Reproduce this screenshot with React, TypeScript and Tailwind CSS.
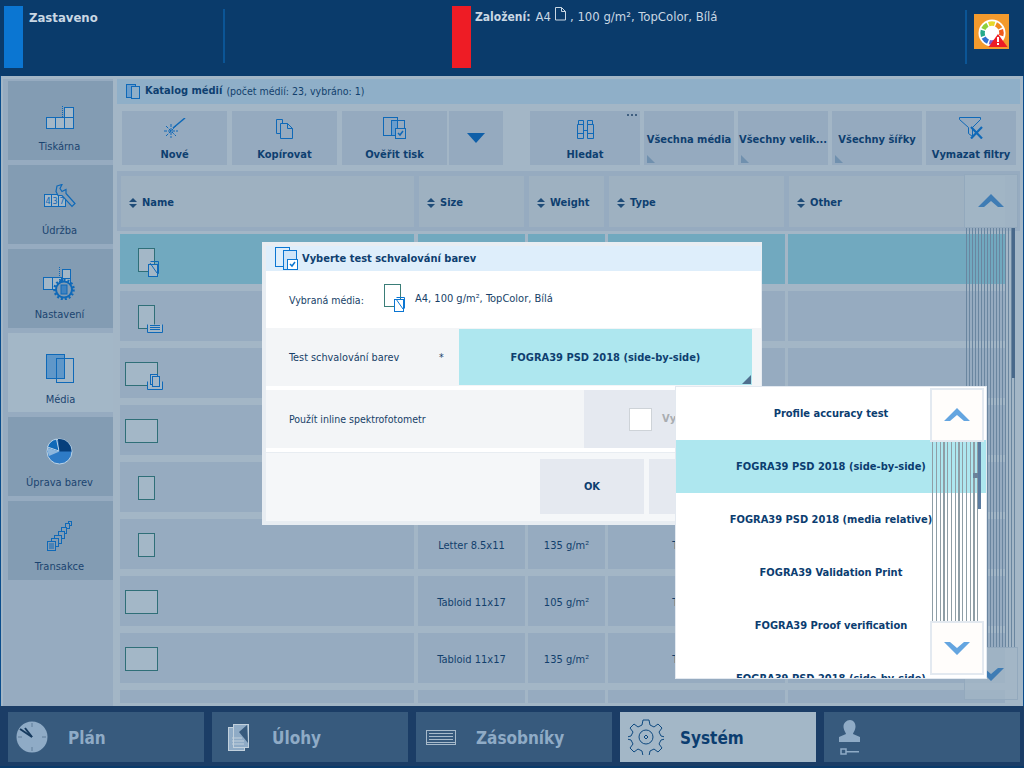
import React from "react";

const B = "#0f69b8";
const G = "#2f6f78";

const Doc = ({ w = 16, h = 23, fill = "#a3b7c7", stroke = G }: { w?: number; h?: number; fill?: string; stroke?: string }) => (
  <rect x="0.5" y="0.5" width={w} height={h} fill={fill} stroke={stroke} />
);

function MediaIcon({ kind }: { kind: number }) {
  if (kind === 0)
    return (
      <svg width="26" height="30" className="ml-[18px] mt-[8px]">
        <Doc />
        <rect x="10.5" y="16.5" width="9" height="12" fill="#a3b7c7" stroke={B} />
        <path d="M12.5 13.500h8v12h-1" fill="none" stroke={B} />
        <path d="M12 15l7 10" stroke={B} />
      </svg>
    );
  if (kind === 1)
    return (
      <svg width="26" height="30" className="ml-[18px] mt-[8px]">
        <Doc />
        <path d="M9.5 19.5v8h15v-8M12 20.5h10M12 22.5h10M12 24.5h10" fill="#a3b7c7" stroke={B} />
      </svg>
    );
  if (kind === 2)
    return (
      <svg width="40" height="30" className="ml-[5px] mt-[8px]">
        <Doc w={32} />
        <path d="M22.5 19.5v8h15v-8" fill="#a3b7c7" stroke={B} />
        <rect x="25.5" y="12.5" width="7" height="10" fill="#a3b7c7" stroke={B} />
        <rect x="27.5" y="14.5" width="7" height="10" fill="#a3b7c7" stroke={B} />
      </svg>
    );
  if (kind === 3 || kind === 5)
    return (
      <svg width="34" height="24" className="ml-[5px] mt-[2px]">
        <Doc w={32} />
      </svg>
    );
  return (
    <svg width="18" height="24" className="ml-[18px] mt-[2px]">
      <Doc />
    </svg>
  );
}

const side = [
  {
    t: "Tiskárna",
    pt: "pt-[25px]",
    i: (
      <svg width="28" height="24" fill="#a3b7c7" stroke={B}>
        <rect x="0.5" y="11.5" width="9" height="11" />
        <rect x="9.5" y="11.5" width="9" height="11" />
        <rect x="18.5" y="11.5" width="9" height="11" />
        <rect x="18.5" y="1.5" width="9" height="10" />
        <path d="M16.5 0v12" strokeDasharray="1 1" />
      </svg>
    ),
  },
  {
    t: "Údržba",
    pt: "pt-[19px]",
    i: (
      <svg width="32" height="24" fill="none" stroke={B}>
        <rect x="0.5" y="10.5" width="7" height="12" fill="#a3b7c7" />
        <rect x="7.5" y="10.5" width="7" height="12" fill="#a3b7c7" />
        <rect x="14.5" y="10.5" width="7" height="12" fill="#a3b7c7" />
        <text x="1.5" y="20" fontSize="9" fill={B} stroke="none">4</text>
        <text x="8.5" y="20" fontSize="9" fill={B} stroke="none">3</text>
        <text x="15.5" y="20" fontSize="9" fill={B} stroke="none">7</text>
        <path d="M13 2l5-1.500-2 4 2 3 4-2v4l9 10-3 3-10-11h-4l-2-4z" fill="#849db4" strokeWidth="1.2" />
      </svg>
    ),
  },
  {
    t: "Nastavení",
    pt: "pt-[18px]",
    i: (
      <svg width="33" height="33" fill="#a3b7c7" stroke={B}>
        <rect x="0.5" y="10.5" width="9" height="12" />
        <rect x="9.5" y="10.5" width="9" height="12" />
        <rect x="19.5" y="2.5" width="8" height="9" />
        <rect x="19.5" y="11.5" width="8" height="9" />
        <path d="M16.5 0v17" strokeDasharray="1 1" />
        <circle cx="21" cy="22.500" r="8" fill="#849db4" strokeWidth="2" />
        <circle cx="21" cy="22.500" r="9.500" fill="none" strokeWidth="2.500" strokeDasharray="2 2" />
        <rect x="18" y="18" width="6" height="9" fill="#3f82c0" />
      </svg>
    ),
  },
  {
    t: "Média",
    active: true,
    pt: "pt-[21px]",
    i: (
      <svg width="29" height="30" stroke={B} fill="none">
        <rect x="0.5" y="0.5" width="18" height="24" fill="#5f97c9" strokeWidth="1" />
        <rect x="10.5" y="4.5" width="17" height="24" />
      </svg>
    ),
  },
  {
    t: "Úprava barev",
    pt: "pt-[21px]",
    i: (
      <svg width="27" height="27" viewBox="0 0 27 27">
        <circle cx="13.5" cy="13.5" r="12.5" fill="#2e7bc6" stroke="#bcd4e8" />
        <path d="M13 13L1.500 9a12 12 0 0 1 9-8z" fill="#0f69b8" stroke="#bcd4e8" />
        <path d="M13.5 13.5L12 1a12.500 12.500 0 0 1 13.500 12.500z" fill="#063f7c" />
        <path d="M13.5 13.5L2 10a12 12 0 0 0 1 8z" fill="#8db6dc" />
      </svg>
    ),
  },
  {
    t: "Transakce",
    pt: "pt-[20px]",
    i: (
      <svg width="26" height="30" fill="#849db4" stroke={B}>
        <rect x="21.5" y="0.5" width="3" height="4" />
        <rect x="18.5" y="2.5" width="4" height="5" />
        <rect x="14.5" y="6.5" width="5" height="6" />
        <rect x="11.5" y="10.5" width="6" height="7" />
        <rect x="7.5" y="14.5" width="7" height="8" />
        <rect x="4.5" y="17.5" width="7" height="8" />
        <rect x="0.5" y="20.5" width="8" height="9" />
        <path d="M2 23h5M2 25h5M2 27h5" />
      </svg>
    ),
  },
];

const Tool = ({ w, icon, label, dots }: { w: string; icon: React.ReactNode; label: string; dots?: boolean }) => (
  <div className={`${w} h-[54px] bg-[#95aabf] flex flex-col items-center relative`}>
    {dots && (
      <div className="absolute top-[3px] right-[3px] flex gap-[2px]">
        <div className="w-[2px] h-[2px] bg-[#3f5f80]" />
        <div className="w-[2px] h-[2px] bg-[#3f5f80]" />
        <div className="w-[2px] h-[2px] bg-[#3f5f80]" />
      </div>
    )}
    <div className="h-[28px] flex items-end justify-center">{icon}</div>
    <div className="text-[11px] leading-[13px] font-bold text-[#0e3f70] mt-[9px] whitespace-nowrap">{label}</div>
  </div>
);

const Filter = ({ label }: { label: string }) => (
  <div className="w-[90px] h-[54px] bg-[#95aabf] flex items-center justify-center relative pt-[4px]">
    <div className="text-[11px] font-bold text-[#0e3f70] whitespace-nowrap">{label}</div>
    <svg width="8" height="8" className="absolute left-[3px] bottom-[2px]">
      <path d="M0 0L8 8H0z" fill="#7090ae" />
    </svg>
  </div>
);

const Sort = ({ label }: { label: string }) => (
  <div className="flex items-center gap-[5px] text-[11px] font-bold text-[#0e3f70]">
    <svg width="8" height="10">
      <path d="M4 0l4 4H0zM4 10l4-4H0z" fill="#1f4c78" />
    </svg>
    {label}
  </div>
);

const rows = [
  { k: 0, s: "", w: "", c: true },
  { k: 1, s: "", w: "" },
  { k: 2, s: "", w: "" },
  { k: 3, s: "", w: "" },
  { k: 4, s: "", w: "" },
  { k: 4, s: "Letter 8.5x11", w: "135 g/m²", t: "TopColor" },
  { k: 5, s: "Tabloid 11x17", w: "105 g/m²", t: "TopColor" },
  { k: 5, s: "Tabloid 11x17", w: "135 g/m²", t: "TopColor" },
];

const cols = [294, 107, 77, 177, 217];

const stripesDark = "bg-[repeating-linear-gradient(90deg,#6a86a0_0,#6a86a0_1px,transparent_1px,transparent_3px)]";
const stripesLight = "bg-[repeating-linear-gradient(90deg,#8f9ea6_0,#8f9ea6_1.25px,transparent_1.25px,transparent_3.75px)]";

const Chevron = ({ up, color }: { up: boolean; color: string }) => (
  <svg width="26" height="14">
    <path d={up ? "M0 13L13 0l13 13h-6l-7-6-7 6z" : "M0 1l13 13L26 1h-6l-7 6-7-6z"} fill={color} />
  </svg>
);

const Nav = ({ label, icon, active }: { label: string; icon: React.ReactNode; active?: boolean }) => (
  <div className={`w-[196px] h-[50px] flex items-center ${active ? "bg-[#a3b7c7]" : "bg-[#375a7d]"}`}>
    <div className="w-[60px] flex justify-center">{icon}</div>
    {label && (
      <div className={`text-[17px] font-bold pt-[4px] ${active ? "text-[#0b3d70]" : "text-[#8fabc6]"}`}>{label}</div>
    )}
  </div>
);

const wheel = ["#e6d92a", "#f08a1e", "#f05a1e", "#ffffff", "#7a5ccf", "#2e6fd0", "#25a98b", "#8ed03c"];

export default function App() {
  return (
    <div className="relative w-[1024px] h-[768px] overflow-hidden bg-[#0a3b6b] font-['DejaVu_Sans',sans-serif] font-stretch-condensed">
      <header className="h-[76px] flex text-[#c9d7e3]">
        <div className="w-[4px]" />
        <div className="w-[19px] h-[62px] mt-[6px] bg-[#0b76d2]" />
        <div className="w-[200px] pl-[6px] pt-[8px] text-[13px] font-bold">Zastaveno</div>
        <div className="w-[2px] h-[54px] mt-[9px] bg-[#0b5596]" />
        <div className="w-[227px]" />
        <div className="w-[19px] h-[62px] mt-[6px] bg-[#ee1c25]" />
        <div className="w-[494px] pl-[4px] pt-[7px] text-[13px] flex items-start">
          <span className="font-bold text-[12px] mr-[5px] pt-[1px]">Založení:</span>
          <span>A4</span>
          <svg width="11" height="14" className="mx-[4px]" fill="none" stroke="#c9d7e3">
            <path d="M0.5 0.5h6l4 4v8.5h-10zM6.5 0.5v4h4" />
          </svg>
          <span>, 100 g/m², TopColor, Bílá</span>
        </div>
        <div className="w-[2px] h-[54px] mt-[10px] bg-[#0b5596]" />
        <div className="w-[7px]" />
        <div className="w-[35px] h-[35px] mt-[14px] bg-[#f39a2d] flex items-center justify-center">
          <svg width="33" height="33" viewBox="0 0 33 33">
            <circle cx="17" cy="18" r="13.500" fill="#fff" />
            {wheel.map((c, i) => (
              <circle
                key={c}
                cx="17"
                cy="18"
                r="9.500"
                fill="none"
                stroke={c}
                strokeWidth="4.500"
                strokeDasharray="6 53.700"
                transform={`rotate(${-110 + i * 45} 17 18)`}
              />
            ))}
            <path d="M23 19l9.500 13h-19z" fill="#ee1c25" />
            <path d="M22 22h2v5h-2zM22 28h2v2h-2z" fill="#fff" />
          </svg>
        </div>
      </header>

      <main className="h-[630px] flex bg-[#a3b6c6] border-x-[1px] border-[#0b4d8c]">
        <aside className="w-[116px] mt-[3px] pl-[2px] flex flex-col">
          <div className="w-[110px] h-full bg-[#96abc0] pl-[5px] pt-[2px] flex flex-col gap-[5px]">
            {side.map((s) => (
              <div
                key={s.t}
                className={`w-[105px] h-[79px] shrink-0 flex flex-col items-center ${s.active ? "bg-[#a3b7c7]" : "bg-[#839cb3] pr-[2px]"}`}
              >
                <div className={`h-[59px] ${s.pt}`}>{s.i}</div>
                <div className={`text-[11px] leading-[13px] text-[#1b4470] ${s.active ? "mt-[1px]" : ""}`}>{s.t}</div>
              </div>
            ))}
          </div>
        </aside>

        <section className="w-[906px] mt-[3px] pr-[3px] flex flex-col">
          <div className="h-[25px] bg-[#8fafc8] flex items-center pl-[9px] text-[10.5px] text-[#123f6c]">
            <svg width="16" height="16" className="mr-[3px]" fill="none" stroke={B}>
              <rect x="0.5" y="0.5" width="9" height="13" fill="#6a9dcc" />
              <rect x="5.5" y="2.5" width="8" height="12" fill="#8fafc8" />
            </svg>
            <b className="text-[11px] text-[#0e3f70] mr-[4px]">Katalog médií</b>
            <span>(počet médií: 23, vybráno: 1)</span>
          </div>
          <div className="h-[2px]" />
          <div className="h-[65px] flex pl-[5px] pt-[5px]">
            <Tool
              w="w-[105px]"
              label="Nové"
              icon={
                <svg width="22" height="21" fill="none" stroke={B}>
                  <path d="M9 10L21 0" strokeWidth="1.500" />
                  <path d="M7 6v14M0 13h14M2 8l10 10M2 18L12 8" strokeDasharray="3 1" />
                </svg>
              }
            />
            <div className="w-[5px]" />
            <Tool
              w="w-[105px]"
              label="Kopírovat"
              icon={
                <svg width="18" height="20" fill="none" stroke={B}>
                  <path d="M0.5 0.5h6v14h-6z" />
                  <path d="M4.5 4.5h7l5 5v10h-12z" fill="#95aabf" />
                  <path d="M11.5 4.5v5h5" />
                </svg>
              }
            />
            <div className="w-[5px]" />
            <Tool
              w="w-[105px]"
              label="Ověřit tisk"
              icon={
                <svg width="24" height="22" fill="none" stroke={B}>
                  <rect x="0.5" y="0.5" width="14" height="18" />
                  <rect x="8.5" y="3.5" width="13" height="15" />
                  <rect x="8.5" y="3.5" width="6" height="15" fill="#6a9dcc" />
                  <rect x="12.5" y="11.5" width="10" height="10" fill="#95aabf" />
                  <path d="M15 16l2 2 3-4" strokeWidth="1.5" />
                </svg>
              }
            />
            <div className="w-[2px]" />
            <div className="w-[54px] h-[54px] bg-[#95aabf] flex items-center justify-center">
              <svg width="18" height="10">
                <path d="M0 0h18L9 10z" fill="#0f5fa8" />
              </svg>
            </div>
            <div className="w-[27px]" />
            <Tool
              w="w-[110px]"
              dots
              label="Hledat"
              icon={
                <svg width="19" height="19" fill="none" stroke={B}>
                  <path d="M2.5 0.5h5v4h-5zM11.5 0.5h5v4h-5zM1.5 4.500h6v14h-6zM11.5 4.500h6v14h-6zM7.5 10.500h4M1.500 13.500h6M11.500 13.500h6" />
                </svg>
              }
            />
            <div className="w-[4px]" />
            <Filter label="Všechna média" />
            <div className="w-[4px]" />
            <Filter label="Všechny velik..." />
            <div className="w-[4px]" />
            <Filter label="Všechny šířky" />
            <div className="w-[4px]" />
            <Tool
              w="w-[90px]"
              label="Vymazat filtry"
              icon={
                <svg width="24" height="22" fill="none" stroke={B}>
                  <path d="M0.5 0.5h21v2l-8 8v9l-4-3v-6l-9-8z" />
                  <path d="M12 10l11 11.500M23 10L12 21.500" strokeWidth="2.200" />
                </svg>
              }
            />
          </div>
          <div className="h-[5px] bg-[#96abc0]" />
          <div className="flex-1 bg-[#a3b6c6] flex flex-col">
            <div className="flex gap-[5px] pl-[4px] bg-[#96abc0] pb-[4px]">
              {[
                [293, "Name"],
                [105, "Size"],
                [75, "Weight"],
                [175, "Type"],
                [216, "Other"],
              ].map(([w, l]) => (
                <div
                  key={l as string}
                  style={{ width: w as number }}
                  className="h-[51px] bg-[#9eb1c1] flex items-center pl-[8px] pt-[3px]"
                >
                  <Sort label={l as string} />
                </div>
              ))}
            </div>
            <div className="h-[3px]" />
            <div className="flex flex-col gap-[7px] pl-[3px]">
              {rows.map((r, i) => (
                <div key={i} className="flex gap-[3px]">
                  {cols.map((w, j) => (
                    <div
                      key={j}
                      style={{ width: w }}
                      className={`h-[50px] flex items-center justify-center text-[11px] text-[#123f6c] ${j > 0 ? "pt-[4px]" : "mr-[1px]"} ${j === 3 ? "pr-[6px]" : ""} ${r.c ? "bg-[#71a9bf]" : "bg-[#96abc0]"}`}
                    >
                      {j === 0 && (
                        <div className="w-full">
                          <MediaIcon kind={r.k} />
                        </div>
                      )}
                      {j === 1 && r.s}
                      {j === 2 && r.w}
                      {j === 3 && r.t}
                    </div>
                  ))}
                </div>
              ))}
              <div className="flex gap-[3px]">
                {cols.map((w, j) => (
                  <div key={j} style={{ width: w }} className={`h-[13px] bg-[#96abc0] ${j === 0 ? "mr-[1px]" : ""}`} />
                ))}
              </div>
            </div>
          </div>
        </section>
      </main>

      <footer className="h-[62px] box-border bg-[#1b3d66] pl-[8px] pt-[6px] flex gap-[8px] border-b-[2px] border-[#0a3b6b]">
        <Nav
          label="Plán"
          icon={
            <svg width="32" height="32" className="-ml-[12px]">
              <circle cx="16" cy="16" r="15.5" fill="#8fabc6" />
              <path d="M16 2v4M16 26v4M2 16h4M26 16h4" stroke="#5f7d99" />
              <path d="M16 16L4 8" stroke="#163a5e" strokeWidth="2" />
              <path d="M16 16L9 7" stroke="#163a5e" strokeWidth="2" />
            </svg>
          }
        />
        <Nav
          label="Úlohy"
          icon={
            <svg width="22" height="27" className="-ml-[7px]">
              <rect x="0.5" y="3.5" width="16" height="23" fill="#8fabc6" stroke="#c1d0dc" />
              <rect x="5.5" y="0.5" width="15" height="23" fill="#8fabc6" stroke="#c1d0dc" />
              <path d="M19 1L11 8l9 11" fill="#375a7d" />
              <path d="M4 14h10M4 17h12M4 20h12" stroke="#c1d0dc" />
            </svg>
          }
        />
        <Nav
          label="Zásobníky"
          icon={
            <svg width="30" height="15" className="-ml-[10px]" fill="none" stroke="#a7bacb">
              <path d="M1 0.500h28M1 14.500h28M1 12.500h28M3 3.500h24M3 6.500h24M3 9.500h24M0.500 0v15M29.500 0v15" />
            </svg>
          }
        />
        <Nav
          active
          label="Systém"
          icon={
            <svg width="36" height="36" viewBox="0 0 36 36" className="-ml-[8px]" fill="none" stroke="#0f4a80">
              <path d="M15 1h6l1 5 4 2 4-3 4 4-3 4 2 4 4 1v2l-4 1-2 4 3 4-4 4-4-3-4 2-1 5h-6l-1-5-4-2-4 3-4-4 3-4-2-4-4-1v-2l4-1 2-4-3-4 4-4 4 3 4-2z" />
              <circle cx="18" cy="18" r="7" />
              <path d="M18 16l2 2-2 2-2-2z" />
            </svg>
          }
        />
        <Nav
          label=""
          icon={
            <svg width="22" height="35" className="-ml-[9px]" fill="#8fabc6">
              <path d="M11 0c3.500 0 5.500 3 5.500 6.500S14 13 14 14l7 3v5H0v-5l7-3c0-1-2.500-4-2.500-7.500S7.500 0 11 0z" />
              <rect x="2" y="29" width="5" height="5" fill="none" stroke="#8fabc6" strokeWidth="1.5" />
              <path d="M7 31h13v1.500H7z" />
            </svg>
          }
        />
      </footer>

      {/* scroll overlay over the table */}
      <div className="absolute left-[964px] top-[174px] w-[54px] h-[526px] flex flex-col">
        <div className="h-[54px] shrink-0 bg-[#a3b6c6]/70 border border-[#93a9bd] flex items-center justify-center">
          <Chevron up color="#3f7cb4" />
        </div>
        <div className={`flex-1 relative ml-[2px] mr-[3px] ${stripesDark}`}>
          <div className="absolute right-0 top-0 w-[3px] h-[150px] bg-[#48688a]" />
        </div>
        <div className="h-[53px] shrink-0 bg-[#a3b6c6]/70 border border-[#93a9bd] flex items-center justify-center">
          <Chevron up={false} color="#3f7cb4" />
        </div>
      </div>

      {/* dialog */}
      <div className="absolute left-[262px] top-[242px] w-[500px] h-[283px] bg-[#e8edf2] p-[4px] pr-0">
        <div className="flex flex-col h-full bg-white w-[495px]">
          <div className="h-[25px] bg-[#deeefb] flex items-center pl-[9px] pt-[1px] text-[11px] font-bold text-[#0e3f70]">
            <svg width="26" height="24" className="mr-[1px] -mt-[1px]" fill="none" stroke="#0b76d2">
              <rect x="0.5" y="0.5" width="14" height="19" />
              <rect x="8.5" y="3.500" width="13" height="19" fill="#cfe5f8" />
              <rect x="12.5" y="12.500" width="10" height="10" fill="#fff" />
              <path d="M15 17l2 2 3-4" strokeWidth="1.5" />
            </svg>
            Vyberte test schvalování barev
          </div>
          <div className="h-[57px] bg-white flex items-center pl-[23px] text-[10.5px] text-[#173f68]">
            <span className="w-[95px] pt-[2px]">Vybraná média:</span>
            <svg width="24" height="30" className="-mt-[1px]" fill="#fff">
              <rect x="0.5" y="0.5" width="16" height="22" stroke="#3a7d78" />
              <rect x="10.5" y="15.500" width="9" height="12" stroke="#0b76d2" />
              <path d="M12.5 13.500h8v11M12 15l7 10" fill="none" stroke="#0b76d2" />
            </svg>
            <span className="ml-[7px] text-[11px]">A4, 100 g/m², TopColor, Bílá</span>
          </div>
          <div className="h-[58px] bg-[#f3f5f7] flex items-center pl-[23px] text-[10.5px] text-[#173f68]">
            <span className="w-[150px] pt-[2px] text-[10.8px]">Test schvalování barev</span>
            <span className="w-[20px] pt-[2px]">*</span>
            <div className="relative w-[293px] h-[56px] pt-[2px] bg-[#aee7ef] flex items-center justify-center text-[11px] font-bold text-[#0e3f70]">
              FOGRA39 PSD 2018 (side-by-side)
              <svg width="9" height="9" className="absolute right-[1px] bottom-[1px]">
                <path d="M9 0v9H0z" fill="#4f6f8e" />
              </svg>
            </div>
          </div>
          <div className="h-[4px]" />
          <div className="h-[58px] bg-[#f3f5f7] flex items-center pl-[23px] text-[10.5px] text-[#173f68]">
            <span className="w-[295px] pt-[2px]">Použít inline spektrofotometr</span>
            <div className="w-[170px] h-[58px] bg-[#e5e9f0] flex items-center pl-[45px]">
              <div className="w-[23px] h-[23px] bg-white border border-[#ced3d8]" />
              <span className="ml-[10px] text-[11px] font-bold text-[#a9adb1]">Vypnuto</span>
            </div>
          </div>
          <div className="h-[1px] mt-[4px] bg-[#e8edf2]" />
          <div className="flex-1 bg-[#f5f7f9] flex justify-end gap-[5px] pt-[6px] pr-[8px]">
            <div className="w-[104px] h-[55px] pt-[2px] bg-[#e5e9f0] flex items-center justify-center text-[11px] font-bold text-[#0e3f70]">OK</div>
            <div className="w-[104px] h-[55px] bg-[#e5e9f0]" />
          </div>
        </div>
      </div>

      {/* dropdown */}
      <div className="absolute left-[675px] top-[386px] w-[312px] h-[293px] bg-white border border-[#e3e9f0] overflow-hidden">
        <div className="flex flex-col w-full">
          {["Profile accuracy test", "FOGRA39 PSD 2018 (side-by-side)", "FOGRA39 PSD 2018 (media relative)", "FOGRA39 Validation Print", "FOGRA39 Proof verification", "FOGRA39 PSD 2018 (side-by-side)"].map((t, i) => (
            <div
              key={i}
              className={`h-[53px] shrink-0 pt-[2px] flex items-center justify-center whitespace-nowrap text-[11px] font-bold text-[#0b3d70] ${i === 1 ? "bg-[#aee7ef]" : ""}`}
            >
              {t}
            </div>
          ))}
        </div>
        <div className="absolute left-[254px] top-[1px] w-[54px] h-[287px] flex flex-col">
          <div className="h-[54px] shrink-0 bg-[#fffdfb] border-2 border-[#e3e9f0] flex items-center justify-center">
            <Chevron up color="#64a5e0" />
          </div>
          <div className={`flex-1 relative ml-[2px] mr-[6px] ${stripesLight}`}>
            <div className="absolute left-[46px] top-0 w-[3px] h-[67px] bg-[#5a7ba0]" />
            <div className="absolute left-[41px] top-[31px] w-[5px] h-[5px] bg-[#6b8299]" />
          </div>
          <div className="h-[54px] shrink-0 bg-[#fffdfb] border-2 border-[#e3e9f0] flex items-center justify-center">
            <Chevron up={false} color="#64a5e0" />
          </div>
        </div>
      </div>
    </div>
  );
}
